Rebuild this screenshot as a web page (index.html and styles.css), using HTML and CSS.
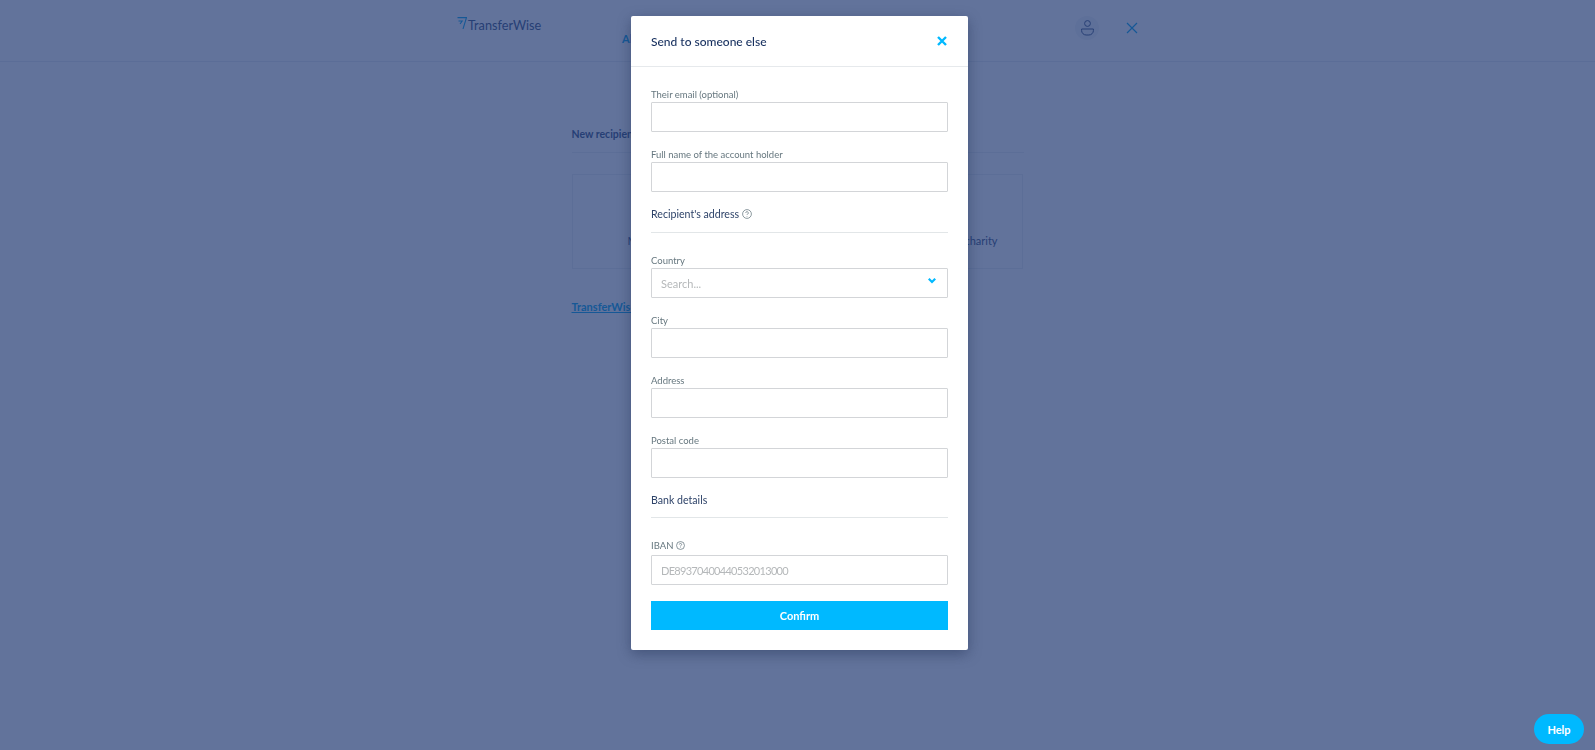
FILE: index.html
```html
<!DOCTYPE html>
<html lang="en">
<head>
  <meta charset="UTF-8">
  <title>Send to someone else</title>
  <link rel="stylesheet" href="styles.css">
</head>
<body>
  <header class="topbar">
    <div class="topbar-inner">
      <a class="logo" href="#">
        <svg class="logo-mark" width="10" height="12" viewBox="0 0 10 12">
          <path d="M.5.600h9L6 12M1.500 4h3.700L3 7" fill="none" stroke="#00a5ee" stroke-width="1.100"/>
        </svg>
        <span>TransferWise</span>
      </a>
      <a class="nav-link" href="#">All</a>
      <div class="topbar-right">
        <div class="avatar">
          <svg width="13" height="16" viewBox="0 0 13 16" fill="none" stroke="#37517e" stroke-width="1">
            <circle cx="6.500" cy="3.500" r="2.900"/>
            <path d="M.6 9h11.800v1.500a4.500 4.500 0 0 1-4.500 4.500h-2.800a4.500 4.500 0 0 1-4.500-4.500z"/>
          </svg>
        </div>
        <svg class="close-page" width="12" height="12" viewBox="0 0 12 12">
          <path d="M1 1l10 10M11 1L1 11" stroke="#00a5ee" stroke-width="1.200" fill="none"/>
        </svg>
      </div>
    </div>
  </header>

  <main class="content">
    <h2 class="content-title">New recipient</h2>
    <div class="type-card">
      <div class="type-option">Myself</div>
      <div class="type-option">Someone else</div>
      <div class="type-option">Business or charity</div>
    </div>
    <a class="content-link" href="#">TransferWise customer</a>
  </main>

  <div class="overlay">
    <div class="modal">
      <div class="modal-header">
        <h1 class="modal-title">Send to someone else</h1>
        <svg class="modal-close" width="10" height="10" viewBox="0 0 10 10">
          <path d="M1 1l8 8M9 1L1 9" stroke="#00b9ff" stroke-width="2.400" fill="none"/>
        </svg>
      </div>
      <form class="modal-body">
        <div class="field">
          <label>Their email (optional)</label>
          <input type="text">
        </div>
        <div class="field">
          <label>Full name of the account holder</label>
          <input type="text">
        </div>
        <div class="section-title">Recipient's address
          <svg class="help-icon" width="10" height="10" viewBox="0 0 10 10"><circle cx="5" cy="5" r="4.400" fill="none" stroke="#5d7079" stroke-width=".7"/><path d="M3.700 3.900a1.300 1.300 0 1 1 1.900 1.200c-.4.200-.6.400-.6.900" fill="none" stroke="#5d7079" stroke-width=".7"/><circle cx="5" cy="7.400" r=".45" fill="#5d7079"/></svg>
        </div>
        <div class="field">
          <label>Country</label>
          <div class="select-box">
            <input type="text" placeholder="Search...">
            <svg class="select-arrow" width="8" height="6" viewBox="0 0 8 6"><path d="M.8.800L4 4l3.200-3.200" stroke="#00b9ff" stroke-width="2.200" fill="none"/></svg>
          </div>
        </div>
        <div class="field">
          <label>City</label>
          <input type="text">
        </div>
        <div class="field">
          <label>Address</label>
          <input type="text">
        </div>
        <div class="field">
          <label>Postal code</label>
          <input type="text">
        </div>
        <div class="section-title section-title-bank">Bank details</div>
        <div class="field">
          <label class="label-with-icon">IBAN
            <svg class="help-icon" width="9" height="9" viewBox="0 0 10 10"><circle cx="5" cy="5" r="4.400" fill="none" stroke="#5d7079" stroke-width=".8"/><path d="M3.700 3.900a1.300 1.300 0 1 1 1.900 1.200c-.4.200-.6.400-.6.900" fill="none" stroke="#5d7079" stroke-width=".8"/><circle cx="5" cy="7.400" r=".45" fill="#5d7079"/></svg>
          </label>
          <input class="iban-input" type="text" placeholder="DE89370400440532013000">
        </div>
        <button class="confirm-btn" type="button">Confirm</button>
      </form>
    </div>
  </div>

  <button class="help-btn" type="button">Help</button>
</body>
</html>
```

FILE: styles.css
```css
* {
  margin: 0;
  padding: 0;
  box-sizing: border-box;
}
body {
  font-family: Lato, 'Open Sans', sans-serif;
  background: #fff;
  color: #37517e;
  height: 750px;
  overflow: hidden;
}
a {
  text-decoration: none;
}
.topbar {
  height: 62px;
  border-bottom: 1px solid #e8ecf1;
}
.topbar-inner {
  width: 685px;
  margin: 0 auto;
  height: 100%;
  display: flex;
  align-items: flex-start;
}
.logo {
  display: flex;
  align-items: flex-start;
  width: 167px;
  padding-top: 17px;
  padding-left: 2px;
  color: #37517e;
  font-size: 12.700px;
}
.logo span {
  margin-left: 1px;
}
.nav-link {
  padding-top: 32px;
  font-size: 11px;
  font-weight: 700;
  color: #00a5ee;
}
.topbar-right {
  margin-left: auto;
  display: flex;
  align-items: center;
  gap: 27px;
  padding-top: 16px;
  padding-right: 2px;
}
.avatar {
  width: 24px;
  height: 24px;
  border-radius: 50%;
  background: #f2f4f7;
  display: flex;
  align-items: center;
  justify-content: center;
}
.close-page {
  margin-top: -1px;
}
.content {
  width: 452px;
  margin: 0 auto;
  padding-top: 65px;
}
.content-title {
  font-size: 10.500px;
  font-weight: 700;
  line-height: 14px;
  padding-bottom: 11px;
  border-bottom: 1px solid #eaeef2;
}
.type-card {
  margin-top: 21px;
  height: 95px;
  width: 451px;
  border: 1px solid #eaeef2;
  display: grid;
  grid-template-columns: repeat(3, 1fr);
  align-items: end;
  padding-bottom: 21px;
  font-size: 11px;
  text-align: center;
}
.type-option:last-child {
  text-align: right;
  padding-right: 24px;
}
.type-option:first-child {
  text-align: left;
  padding-left: 55px;
}
.content-link {
  display: inline-block;
  margin-top: 31px;
  font-size: 11px;
  font-weight: 700;
  color: #00a5ee;
  text-decoration: underline;
}
.overlay {
  position: fixed;
  inset: 0;
  background: rgba(31, 56, 112, 0.7);
  padding-top: 16px;
  padding-left: 631px;
}
.modal {
  width: 337px;
  height: 634px;
  background: #fff;
  border-radius: 2px;
  box-shadow: 0 4px 14px rgba(20, 35, 70, 0.4);
}
.modal-header {
  height: 51px;
  border-bottom: 1px solid #e6e9ec;
  display: flex;
  align-items: center;
  justify-content: space-between;
  padding: 0 21px 0 20px;
}
.modal-title {
  font-size: 12px;
  font-weight: 500;
  color: #17305f;
}
.modal-body {
  padding: 20px 20px 0;
}
.field {
  margin-bottom: 15px;
}
.field label {
  display: block;
  font-size: 9.500px;
  line-height: 15px;
  color: #66777f;
  height: 15px;
}
.field .label-with-icon {
  height: 17px;
}
.field input {
  display: block;
  width: 100%;
  height: 30px;
  border: 1px solid #d3d5d8;
  border-radius: 1px;
  padding: 0 9px;
  font-family: inherit;
  font-size: 11px;
  outline: none;
}
.field input::placeholder {
  color: #b5b8ba;
}
.field .iban-input {
  letter-spacing: -0.7px;
}
.select-box {
  position: relative;
}
.select-arrow {
  position: absolute;
  right: 12px;
  top: 10px;
}
.section-title {
  font-size: 10.600px;
  color: #2e4369;
  height: 26px;
  line-height: 14px;
  border-bottom: 1px solid #e2e6e8;
  margin-bottom: 20px;
}
.section-title-bank {
  height: 25px;
}
.help-icon {
  vertical-align: -1px;
}
.confirm-btn {
  display: block;
  width: 100%;
  height: 29px;
  margin-top: 16px;
  border: none;
  background: #00b9ff;
  color: #fff;
  font-family: inherit;
  font-size: 11px;
  font-weight: 700;
}
.help-btn {
  position: fixed;
  right: 11px;
  bottom: 6px;
  width: 50px;
  height: 30px;
  border: none;
  border-radius: 15px;
  background: #00b9ff;
  color: #fff;
  font-family: inherit;
  font-size: 11px;
  font-weight: 700;
}
```
